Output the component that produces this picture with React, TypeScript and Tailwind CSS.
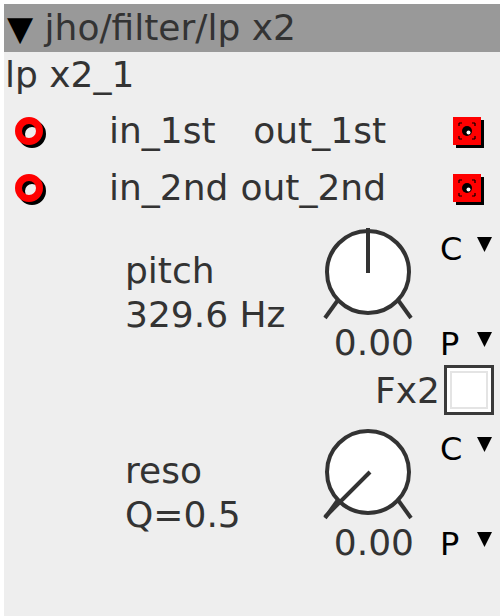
const font = "font-['DejaVu_Sans',sans-serif]";

function Inlet() {
  return (
    <svg width="32" height="32" className="mt-[5px] shrink-0">
      <circle cx="17" cy="17" r="10.5" fill="none" stroke="#000" strokeWidth="7" />
      <circle cx="14" cy="14" r="10.5" fill="none" stroke="#ff0000" strokeWidth="7" />
    </svg>
  );
}

function Outlet() {
  return (
    <svg width="32" height="32" className="mt-[5px] shrink-0">
      <rect x="3" y="3" width="28" height="28" fill="#000" />
      <rect x="0" y="0" width="28" height="28" fill="#ff0000" />
      <rect x="6" y="6" width="16" height="16" fill="none" stroke="#000" strokeWidth="1.2" strokeDasharray="3 10 3 0" />
      <circle cx="14" cy="14" r="5" fill="#000" />
      <circle cx="15.5" cy="15.5" r="2" fill="#fff" />
    </svg>
  );
}

function Knob({ pointer }: { pointer: [number, number, number, number] }) {
  return (
    <svg width="96" height="98" className="shrink-0">
      <line x1="18" y1="76" x2="5" y2="94" stroke="#333" strokeWidth="4" />
      <line x1="78" y1="76" x2="91" y2="94" stroke="#333" strokeWidth="4" />
      <circle cx="48" cy="48" r="41" fill="#fff" stroke="#333" strokeWidth="4" />
      <line x1={pointer[0]} y1={pointer[1]} x2={pointer[2]} y2={pointer[3]} stroke="#333" strokeWidth="4" />
    </svg>
  );
}

function Tri() {
  return (
    <svg width="15" height="15" className="mt-[7px] shrink-0">
      <polygon points="0,0 15,0 7.5,15" fill="#000" />
    </svg>
  );
}

function PortRow({ inName, outName }: { inName: string; outName: string }) {
  return (
    <div className="flex h-[57px] items-center leading-[42px]">
      <div className="w-[105px] pl-[11px] flex">
        <Inlet />
      </div>
      <span>{inName}</span>
      <span className="flex-1" />
      <span>{outName}</span>
      <div className="w-[114px] pl-[67px] flex">
        <Outlet />
      </div>
    </div>
  );
}

function ParamBlock({ name, value, pointer }: { name: string; value: string; pointer: [number, number, number, number] }) {
  return (
    <div className="flex h-[144px]">
      <div className="w-[316px] pl-[121px] pt-[33px] leading-[44px]">
        <div>{name}</div>
        <div>{value}</div>
      </div>
      <div className="w-[96px] pt-[8px] flex flex-col">
        <Knob pointer={pointer} />
        <div className="text-right pr-[2px] leading-[42px]">0.00</div>
      </div>
      <div className="ml-[24px] pt-[14px] text-[32px] leading-[38px] text-black">
        <div className="flex items-start">
          <span className="w-[37px]">C</span>
          <Tri />
        </div>
        <div className="mt-[57px] flex items-start">
          <span className="w-[37px]">P</span>
          <Tri />
        </div>
      </div>
    </div>
  );
}

export default function App() {
  return (
    <div className={`w-[504px] h-[616px] bg-white px-1 pt-1 ${font} text-[36px] text-[#333]`}>
      <div className="h-full bg-[#eeeeee] overflow-hidden">
        <div className="h-12 bg-[#999999] leading-[48px] whitespace-pre pl-[3px]">
          <span className="text-black text-[34px]">▼</span> jho/filter/lp x2
        </div>
        <div className="h-[46px] leading-[46px] pl-[1px]">lp x2_1</div>
        <div className="mt-1">
          <PortRow inName="in_1st" outName="out_1st" />
          <PortRow inName="in_2nd" outName="out_2nd" />
        </div>
        <ParamBlock name="pitch" value="329.6 Hz" pointer={[48, 4, 48, 49]} />
        <div className="flex h-[56px] items-start justify-end pr-[6px]">
          <span className="mt-[10px] leading-[42px] mr-[4px]">Fx2</span>
          <div className="mt-[5px] w-[50px] h-[50px] border-[3px] border-[#3a3a3a] bg-white p-[3px]">
            <div className="h-full w-full border-2 border-[#e4e4e4] bg-white" />
          </div>
        </div>
        <ParamBlock name="reso" value="Q=0.5" pointer={[50, 48, 5, 93]} />
      </div>
    </div>
  );
}
